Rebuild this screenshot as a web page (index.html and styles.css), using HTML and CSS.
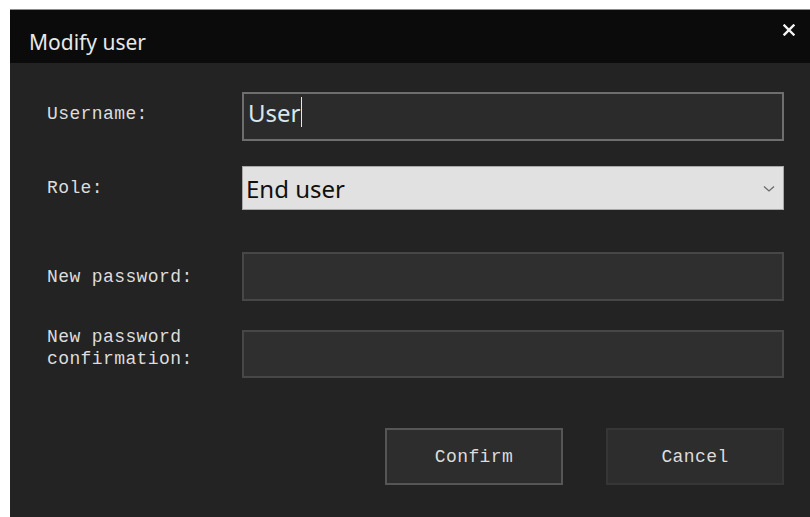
FILE: index.html
```html
<!DOCTYPE html>
<html lang="en">
<head>
<meta charset="utf-8">
<title>Modify user</title>
<link rel="stylesheet" href="styles.css">
</head>
<body>
<div class="dialog">
  <div class="titlebar">
    <span class="title">Modify user</span>
    <svg class="close" width="12" height="12" viewBox="0 0 12 12"><path d="M1.5 1.5 L10.5 10.5 M10.5 1.5 L1.5 10.5" stroke="#f4f4f4" stroke-width="2.4" stroke-linecap="square"/></svg>
  </div>
  <div class="content">
    <div class="row row-user">
      <label class="label">Username:</label>
      <div class="field field-focus"><span class="value">User</span><span class="caret"></span></div>
    </div>
    <div class="row row-role">
      <label class="label">Role:</label>
      <div class="select">
        <span class="select-value">End user</span>
        <svg class="chevron" width="12" height="8" viewBox="0 0 12 8"><path d="M1 1.5 L6 6 L11 1.5" fill="none" stroke="#6a6a6a" stroke-width="1.3"/></svg>
      </div>
    </div>
    <div class="row row-pass">
      <label class="label">New password:</label>
      <div class="field"></div>
    </div>
    <div class="row row-conf">
      <label class="label">New password<br>confirmation:</label>
      <div class="field"></div>
    </div>
    <div class="actions">
      <button class="btn btn-confirm">Confirm</button>
      <button class="btn btn-cancel">Cancel</button>
    </div>
  </div>
</div>
</body>
</html>
```
FILE: styles.css
```css
html, body {
  margin: 0;
  padding: 0;
  background: #ffffff;
}

body {
  width: 810px;
  height: 517px;
  overflow: hidden;
}

.dialog {
  margin: 9px 0 0 10px;
  width: 800px;
  height: 508px;
  border-top: 1px solid #8c8c8c;
  background: #232323;
  display: flex;
  flex-direction: column;
}

.titlebar {
  height: 53px;
  background: #0b0b0b;
  display: flex;
  align-items: center;
  justify-content: space-between;
  padding: 0 15px 0 19px;
  box-sizing: border-box;
}

.title {
  font-family: "Noto Sans", "Open Sans", sans-serif;
  font-size: 21px;
  color: #e8e8e8;
  margin-top: 10px;
}

.close {
  margin-top: -13px;
}

.content {
  padding: 29px 26px 0 37px;
  display: flex;
  flex-direction: column;
}

.row {
  display: grid;
  grid-template-columns: 195px 542px;
  align-items: center;
}

.row-role { margin-top: 25px; }
.row-pass { margin-top: 42px; }
.row-conf { margin-top: 29px; }

.label {
  font-family: "Liberation Mono", "DejaVu Sans Mono", monospace;
  font-size: 18px;
  letter-spacing: 0.4px;
  line-height: 22px;
  color: #dddddd;
}

.row-user .label {
  margin-top: -5px;
}

.row-conf .label {
  margin-top: -12px;
}

.field {
  height: 49px;
  box-sizing: border-box;
  border: 2px solid #474747;
  background: #2f2f2f;
  display: flex;
  align-items: center;
  padding-left: 4px;
}

.field-focus {
  border-color: #6e6e6e;
  background: #2b2b2b;
}

.row-conf .field {
  height: 48px;
}

.value {
  font-family: "Noto Sans", "Open Sans", sans-serif;
  font-size: 24px;
  color: #d8e6ee;
  margin-top: -8px;
}

.caret {
  width: 1px;
  height: 30px;
  background: #e6e6e6;
  margin-top: -10px;
}

.select {
  height: 44px;
  box-sizing: border-box;
  border: 1px solid #a8a8a8;
  background: #e1e1e1;
  display: flex;
  align-items: center;
  justify-content: space-between;
  padding: 0 8px 0 3px;
}

.select-value {
  font-family: "Noto Sans", "Open Sans", sans-serif;
  font-size: 24px;
  color: #101010;
}

.chevron {
  margin-top: 1px;
}

.actions {
  display: flex;
  justify-content: flex-end;
  gap: 43px;
  margin-top: 50px;
}

.btn {
  width: 178px;
  height: 57px;
  box-sizing: border-box;
  background: #2d2d2d;
  font-family: "Liberation Mono", "DejaVu Sans Mono", monospace;
  font-size: 18px;
  letter-spacing: 0.4px;
  color: #dcdcdc;
  padding: 0;
}

.btn-confirm {
  border: 2px solid #565656;
}

.btn-cancel {
  border: 2px solid #363636;
}
```
